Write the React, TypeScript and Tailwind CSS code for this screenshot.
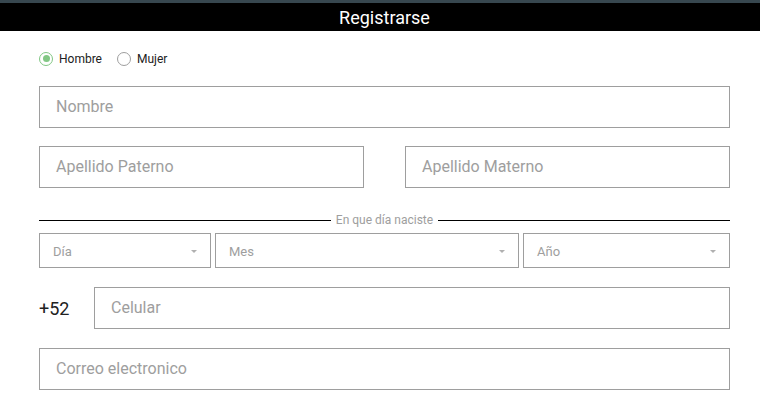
import React from "react";

const font = { fontFamily: "Roboto, 'Liberation Sans', sans-serif" };

function Field({ label, className = "" }: { label: string; className?: string }) {
  return (
    <div
      className={`h-[42px] border border-[#9e9e9e] flex items-center pl-[16px] text-[16px] text-[#9e9e9e] ${className}`}
    >
      {label}
    </div>
  );
}

function Select({ label, className = "" }: { label: string; className?: string }) {
  return (
    <div
      className={`h-[35px] border border-[#9e9e9e] flex items-center justify-between pl-[13px] pr-[13px] pt-[2px] text-[13px] text-[#9e9e9e] ${className}`}
    >
      <span>{label}</span>
      <svg width="6" height="3" viewBox="0 0 6 3">
        <path d="M0 0 L6 0 L3 3 Z" fill="#b0b0b0" />
      </svg>
    </div>
  );
}

function Radio({ checked, label }: { checked?: boolean; label: string }) {
  return (
    <div className="flex items-center gap-[6px]">
      <div
        className={`w-[14px] h-[14px] rounded-full border-[1.5px] flex items-center justify-center ${
          checked ? "border-[#81c784]" : "border-[#9e9e9e]"
        }`}
      >
        {checked && <div className="w-[7px] h-[7px] rounded-full bg-[#81c784]" />}
      </div>
      <span className="text-[12px] text-[#212121]">{label}</span>
    </div>
  );
}

export default function App() {
  return (
    <div className="w-[760px] h-[407px] bg-white overflow-hidden" style={font}>
      <div className="h-[3px] bg-[#37474f]" />
      <div className="h-[28px] bg-black flex items-center justify-center pl-[9px] text-white text-[18px]">
        Registrarse
      </div>
      <div className="pl-[39px] pr-[30px]">
        <div className="mt-[19px] h-[17px] flex items-center gap-[15px]">
          <Radio checked label="Hombre" />
          <Radio label="Mujer" />
        </div>
        <Field label="Nombre" className="mt-[19px]" />
        <div className="mt-[18px] flex gap-[41px]">
          <Field label="Apellido Paterno" className="flex-1" />
          <Field label="Apellido Materno" className="flex-1" />
        </div>
        <div className="mt-[25px] h-[14px] flex items-center gap-[5px]">
          <div className="flex-1 h-px bg-black" />
          <span className="text-[12px] text-[#9e9e9e]">En que día naciste</span>
          <div className="flex-1 h-px bg-black" />
        </div>
        <div className="mt-[6px] flex gap-[4px]">
          <Select label="Día" className="w-[172px]" />
          <Select label="Mes" className="w-[304px]" />
          <Select label="Año" className="flex-1" />
        </div>
        <div className="mt-[19px] flex items-center">
          <span className="w-[55px] text-[18px] text-[#212121]">+52</span>
          <Field label="Celular" className="flex-1" />
        </div>
        <Field label="Correo electronico" className="mt-[19px]" />
      </div>
    </div>
  );
}
